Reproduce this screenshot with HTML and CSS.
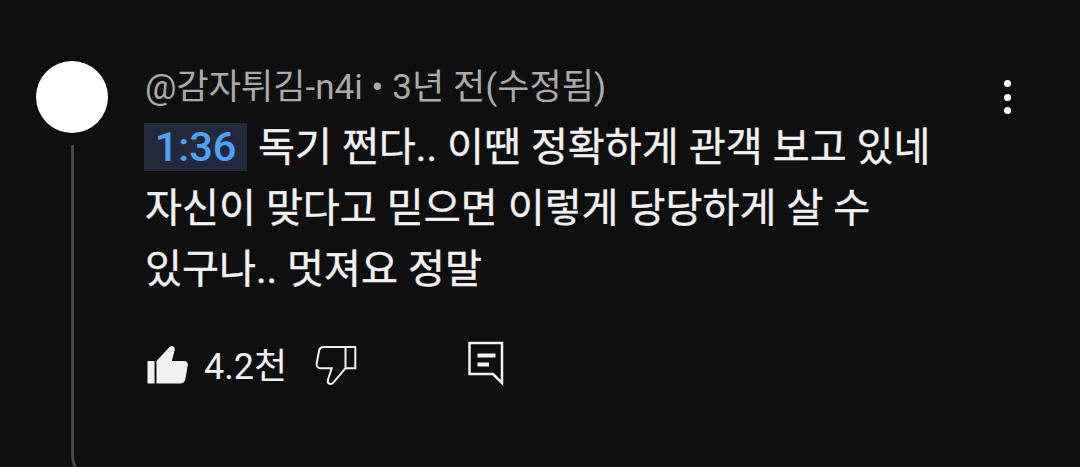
FILE: index.html
```html
<!DOCTYPE html>
<html lang="ko">
<head>
<meta charset="UTF-8">
<meta name="viewport" content="width=device-width, initial-scale=1.0">
<title>댓글</title>
<link rel="stylesheet" href="styles.css">
</head>
<body>
<div class="comment">
    <div class="side">
        <div class="avatar"></div>
        <div class="thread-line"></div>
    </div>
    <div class="content">
        <div class="meta">@감자튀김-n4i • 3년 전(수정됨)</div>
        <p class="text"><span class="timestamp">1:36</span> 독기 쩐다.. 이땐 정확하게 관객 보고 있네<br>자신이 맞다고 믿으면 이렇게 당당하게 살 수<br>있구나.. 멋져요 정말</p>
        <div class="actions">
            <svg class="like" width="42" height="42" viewBox="0 0 42 42">
                <path d="M.5 16h7v22.500H.5zM9.500 38.500V16L22.300 2.200c1.200-1.300 2.800-1.600 4.200-.700 1.300.900 1.600 2.300 1.100 4L24.800 16H37c3 0 4.300 2.200 3.700 5l-2.500 13.500c-.6 2.600-2.300 4-5 4z"/>
            </svg>
            <span class="count">4.2천</span>
            <svg class="dislike" width="42" height="42" viewBox="0 0 42 42">
                <path d="M30.500 1.900H8.500C6.200 1.900 4.700 3 4.200 5.200L1.700 18c-.6 3 .9 5.200 4 5.200h11L13 34.500c-.6 2 0 3.700 1.500 4.300 1.400.600 2.700.200 3.800-1.100L30.500 23.200zM30.500 1.900h9.800v21.300h-9.800"/>
            </svg>
            <svg class="reply" width="38" height="46" viewBox="0 0 38 46">
                <path class="frame" d="M2.500 2h32.500v40L26 33H2.500z"/>
                <path class="lines" d="M10.500 14.500h18M10.500 23.500h11.500"/>
            </svg>
        </div>
    </div>
    <div class="menu">
        <span class="dot"></span>
        <span class="dot"></span>
        <span class="dot"></span>
    </div>
</div>
</body>
</html>
```
FILE: styles.css
```css
body {
    margin: 0;
    background-color: #0f0f0f;
    color: #f1f1f1;
    font-family: Roboto, "Noto Sans CJK KR", sans-serif;
}
.comment {
    display: flex;
    height: 467px;
    box-sizing: border-box;
    padding: 61px 66px 0 36px;
    overflow: hidden;
}
.side {
    width: 72px;
    margin-right: 36px;
    display: flex;
    flex-direction: column;
    align-items: center;
}
.avatar {
    width: 72px;
    height: 72px;
    border-radius: 50%;
    background-color: #fff;
    flex-shrink: 0;
}
/* line down to the replies, starts to curve at the bottom edge */
.thread-line {
    width: 30px;
    height: 340px;
    flex-shrink: 0;
    margin-top: 12px;
    margin-left: 28px;
    box-sizing: border-box;
    border-left: 3px solid #484848;
    border-bottom: 3px solid #484848;
    border-bottom-left-radius: 32px;
}
.content {
    flex: 1;
}
.meta {
    height: 54px;
    line-height: 54px;
    padding-left: 1px;
    font-size: 35px;
    letter-spacing: 0.05px;
    color: #aaa;
    white-space: nowrap;
}
.text {
    margin: 2px 0 0;
    padding-left: 1px;
    font-size: 40.2px;
    line-height: 61px;
    white-space: nowrap;
    -webkit-text-stroke: 0.4px #f1f1f1;
}
.timestamp {
    display: inline-block;
    width: 103px;
    height: 48px;
    line-height: 48px;
    margin-left: -1px;
    margin-right: 1px;
    text-align: center;
    font-size: 41.5px;
    font-weight: 500;
    color: #4ba3f3;
    background-color: #242a3b;
    -webkit-text-stroke: 0;
}
.actions {
    display: flex;
    align-items: flex-start;
    margin-top: 41px;
}
.like {
    margin: 4px 0 0 3px;
    fill: #f1f1f1;
}
.count {
    margin-left: 15px;
    width: 84px;
    font-size: 36px;
    line-height: 52px;
}
.dislike {
    margin: 4px 0 0 27px;
    fill: none;
    stroke: #f1f1f1;
    stroke-width: 2;
}
.reply {
    margin-left: 110px;
    fill: none;
    stroke: #f1f1f1;
}
.frame {
    stroke-width: 2.500;
}
.lines {
    stroke-width: 4;
}
.menu {
    display: flex;
    flex-direction: column;
    gap: 6.500px;
    margin-top: 19px;
    width: 10px;
}
.dot {
    width: 7px;
    height: 7px;
    border-radius: 50%;
    background-color: #fff;
}
```
